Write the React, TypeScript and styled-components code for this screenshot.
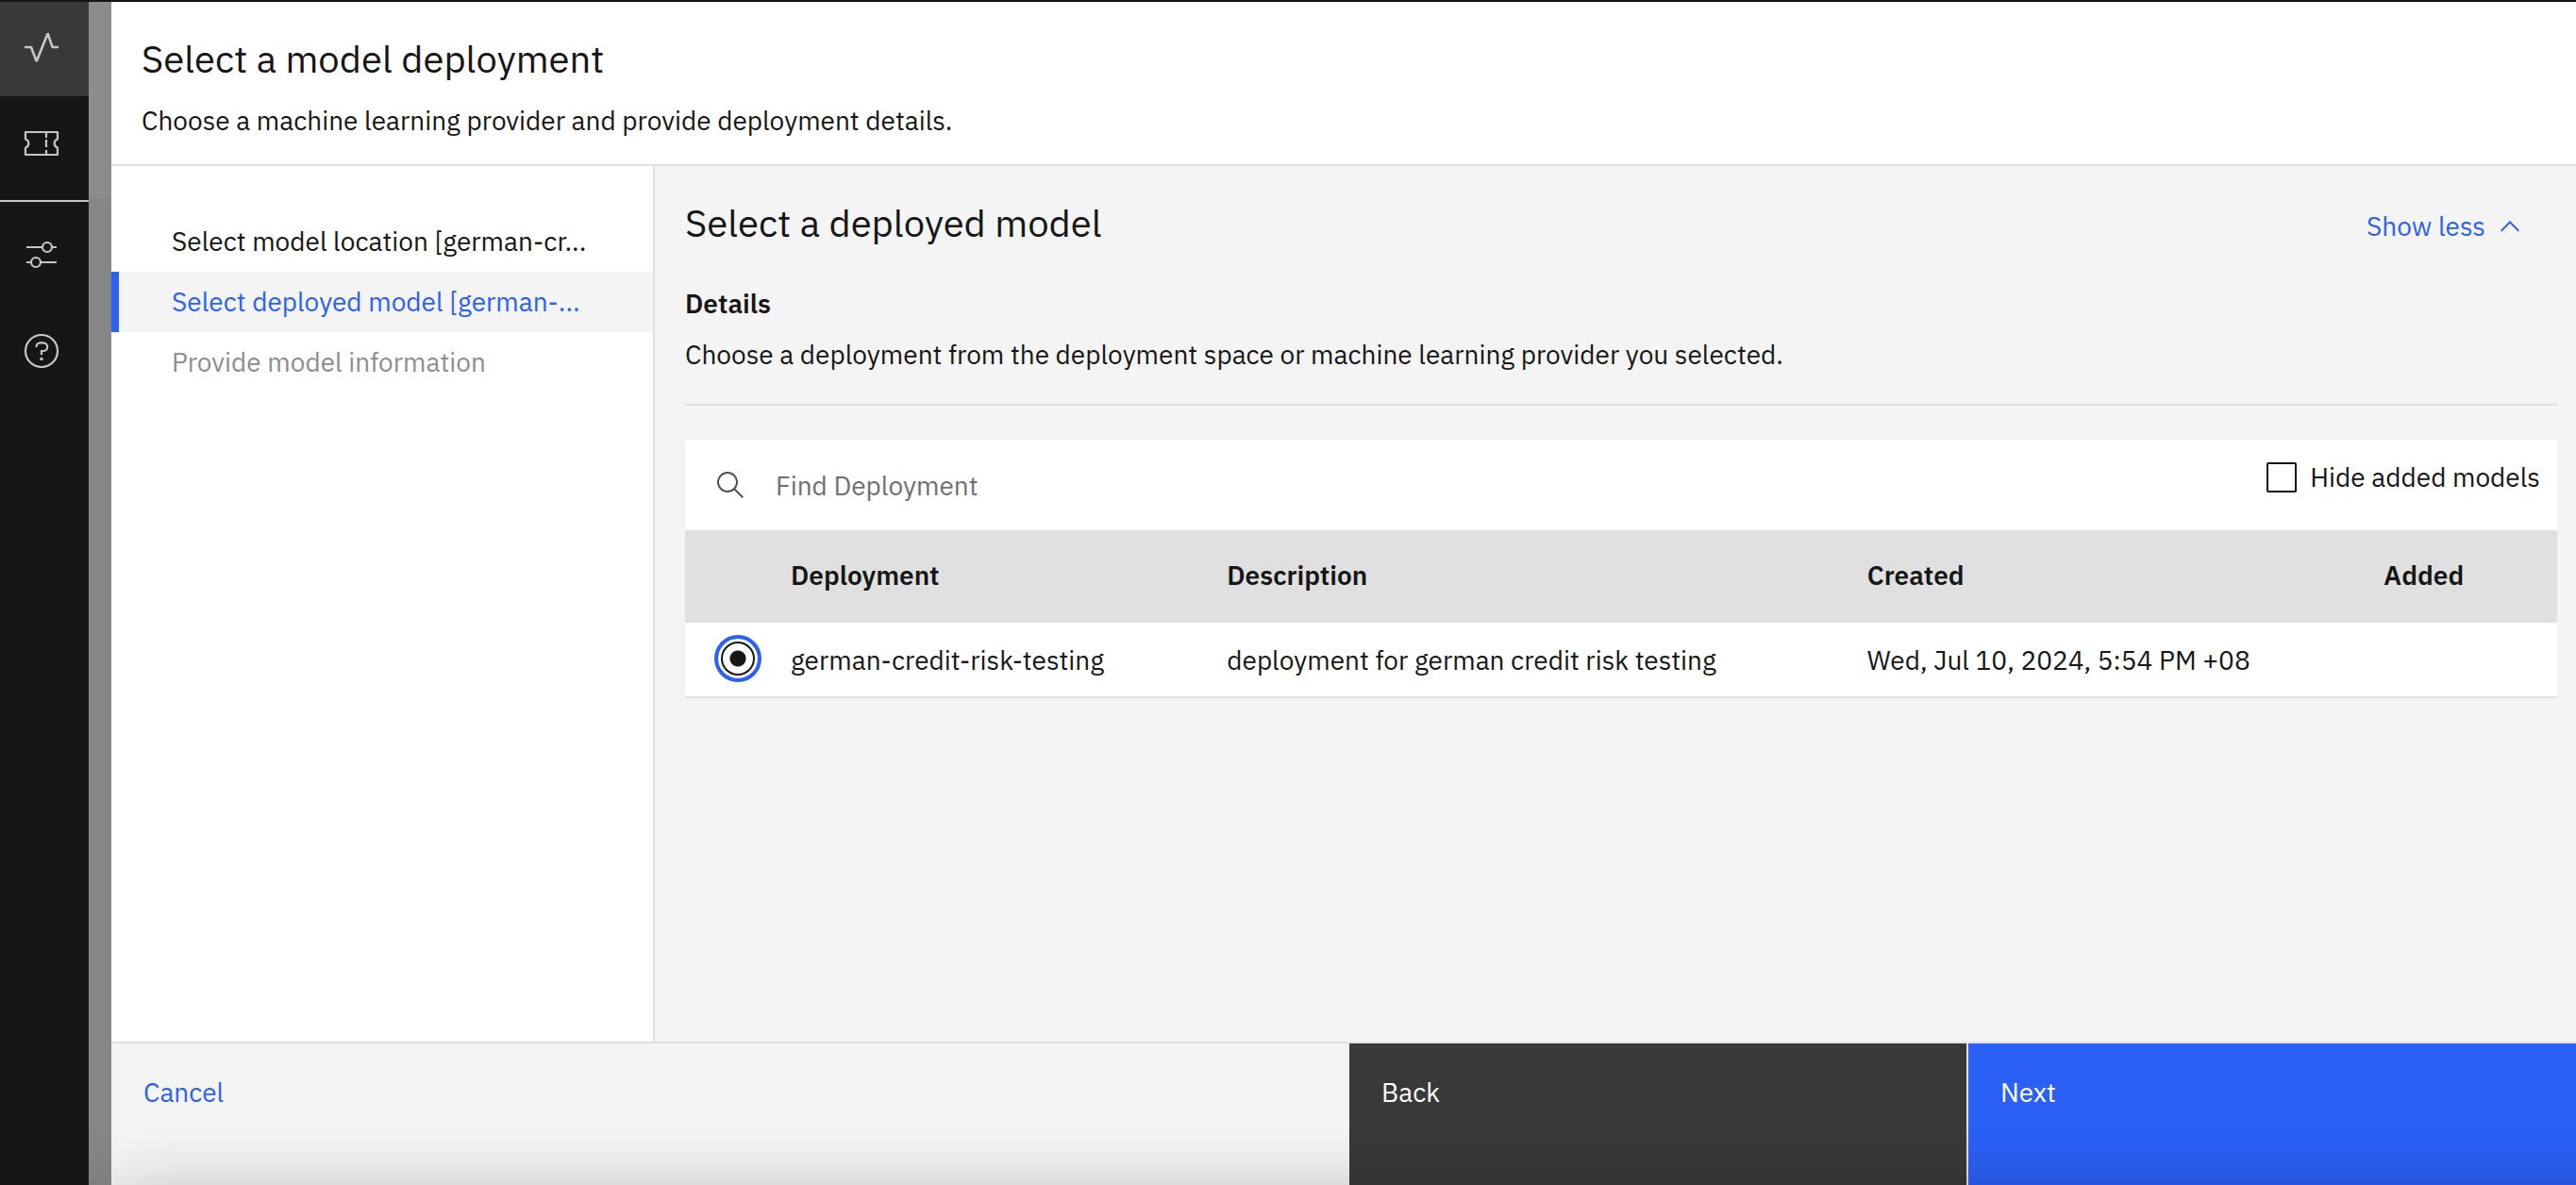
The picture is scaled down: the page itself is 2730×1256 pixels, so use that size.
import React, { useState } from "react";
import styled, { createGlobalStyle } from "styled-components";

const color = {
  ink: "#161616",
  blue: "#2b60f6",
  dark: "#393939",
  line: "#e0e0e0",
  layer: "#f4f4f4",
  muted: "#6f6f6f",
  disabled: "#8d8d8d",
  icon: "#c6c6c6",
};

const GlobalStyle = createGlobalStyle`
  *, *::before, *::after { box-sizing: border-box; }
  body {
    margin: 0;
    color: ${color.ink};
    font-family: "IBM Plex Sans", Roboto, "Liberation Sans", sans-serif;
    font-size: 28px;
    line-height: 36px;
  }
  button, input { font: inherit; color: inherit; }
  h1, h2, h3, p, ol { margin: 0; padding: 0; }
`;

const Shell = styled.div`
  position: relative;
  display: flex;
  min-height: 100vh;
  border-top: 2px solid ${color.ink};
`;

const Rail = styled.nav`
  display: flex;
  flex-direction: column;
  flex: none;
  width: 94px;
  background: ${color.ink};
`;

const RailGroup = styled.div<{ $item: number }>`
  display: grid;
  grid-auto-rows: ${(p) => p.$item}px;
`;

const RailButton = styled.button<{ $active?: boolean }>`
  display: flex;
  align-items: center;
  padding: 0 0 0 26px;
  border: 0;
  background: ${(p) => (p.$active ? color.dark : "transparent")};
  color: ${color.icon};
  cursor: pointer;
`;

const RailDivider = styled.hr`
  width: 100%;
  height: 2px;
  margin: 10px 0 5px;
  border: 0;
  background: ${color.icon};
`;

const RailIcon = styled.svg.attrs({ viewBox: "0 0 36 36", fill: "none", stroke: "currentColor", "aria-hidden": true })`
  width: 36px;
  height: 36px;
  overflow: visible;
  stroke-width: 2.2;
`;

const Backdrop = styled.div`
  display: flex;
  flex-direction: column;
  flex: none;
  width: 24px;
  background: #868686;
`;

const BackdropHeader = styled.div`
  height: 208px;
  background: #8c8c8c;
`;

const Panel = styled.div`
  display: flex;
  flex: 1;
  flex-direction: column;
  min-width: 0;
  background: ${color.layer};
`;

const PanelHeader = styled.header`
  display: grid;
  gap: 20px;
  padding: 32px 32px 28px;
  border-bottom: 2px solid ${color.line};
  background: #fff;
`;

const Title = styled.h1`
  font-size: 40px;
  font-weight: 400;
  line-height: 56px;
`;

const PanelBody = styled.div`
  display: flex;
  flex: 1;
`;

const Steps = styled.ol`
  flex: none;
  width: 576px;
  padding-top: 48px;
  border-right: 2px solid ${color.line};
  background: #fff;
  list-style: none;
`;

const StepButton = styled.button<{ $active?: boolean }>`
  display: flex;
  align-items: center;
  width: 100%;
  height: 64px;
  padding: 0 32px 0 ${(p) => (p.$active ? 56 : 64)}px;
  border: 0;
  border-left: ${(p) => (p.$active ? `8px solid ${color.blue}` : 0)};
  background: ${(p) => (p.$active ? color.layer : "transparent")};
  color: ${(p) => (p.$active ? color.blue : color.ink)};
  white-space: nowrap;
  cursor: pointer;

  &:disabled {
    color: ${color.disabled};
    cursor: default;
  }
`;

const Content = styled.main`
  flex: 1;
  min-width: 0;
  padding: 32px 20px 32px 32px;
`;

const ContentHeader = styled.div`
  display: flex;
  align-items: flex-start;
  justify-content: space-between;
  margin-bottom: 32px;
`;

const ToggleButton = styled.button`
  display: flex;
  align-items: center;
  gap: 10px;
  height: 64px;
  padding: 0 34px 0 0;
  border: 0;
  background: none;
  color: ${color.blue};
  cursor: pointer;
`;

const Chevron = styled.svg`
  width: 32px;
  height: 32px;
  fill: currentColor;
`;

const Details = styled.section`
  display: grid;
  gap: 18px;
  padding-bottom: 34px;
  border-bottom: 2px solid ${color.line};
`;

const SectionTitle = styled.h3`
  font-size: 28px;
  font-weight: 600;
`;

const Deployments = styled.section`
  margin-top: 36px;
`;

const Toolbar = styled.div`
  display: flex;
  height: 96px;
  padding: 0 18px 0 32px;
  background: #fff;
`;

const SearchField = styled.label`
  display: flex;
  flex: 1;
  align-items: center;
  gap: 32px;
`;

const SearchIcon = styled.svg`
  flex: none;
  width: 32px;
  height: 32px;
  stroke: #525252;
  stroke-width: 2;
  fill: none;
`;

const SearchInput = styled.input`
  flex: 1;
  min-width: 0;
  height: 64px;
  padding: 0;
  border: 0;
  outline: 0;
  background: none;

  &::placeholder {
    color: ${color.muted};
    opacity: 1;
  }
`;

const CheckLabel = styled.label`
  display: flex;
  align-items: center;
  align-self: flex-start;
  gap: 14px;
  padding-top: 22px;
`;

const Checkbox = styled.input`
  width: 32px;
  height: 32px;
  margin: 0;
  border: 2px solid ${color.ink};
  border-radius: 2px;
  background: #fff;
  appearance: none;

  &:checked {
    background: ${color.ink};
    box-shadow: inset 0 0 0 4px #fff;
  }
`;

const Table = styled.table`
  width: 100%;
  border-collapse: collapse;
  table-layout: fixed;
  text-align: left;
`;

const HeadCell = styled.th<{ $width?: string }>`
  width: ${(p) => p.$width ?? "auto"};
  height: 98px;
  padding: 0 0 2px;
  background: ${color.line};
  font-weight: 600;
`;

const Row = styled.tr`
  background: #fff;
  box-shadow: inset 0 -2px 0 ${color.line};
`;

const Cell = styled.td`
  height: 80px;
  padding: 0;
`;

const RadioCell = styled(Cell)`
  padding-bottom: 4px;
  text-align: center;
  line-height: 0;
`;

const Radio = styled.input`
  width: 36px;
  height: 36px;
  margin: 0;
  border: 2px solid ${color.ink};
  border-radius: 50%;
  background: #fff;
  appearance: none;
  vertical-align: middle;

  &:checked {
    background: radial-gradient(circle, ${color.ink} 8px, #fff 9px);
    outline: 4px solid ${color.blue};
    outline-offset: 3px;
  }
`;

const Footer = styled.footer`
  display: grid;
  grid-template-columns: 656fr 328fr 322fr;
  height: 152px;
  border-top: 2px solid ${color.line};
`;

const FooterButton = styled.button<{ $kind: "ghost" | "secondary" | "primary" }>`
  display: flex;
  align-items: flex-start;
  padding: 34px;
  border: 0;
  border-right: ${(p) => (p.$kind === "secondary" ? `2px solid ${color.line}` : 0)};
  background: ${(p) => ({ ghost: "transparent", secondary: color.dark, primary: color.blue })[p.$kind]};
  color: ${(p) => (p.$kind === "ghost" ? color.blue : "#fff")};
  cursor: pointer;
`;

const BottomShade = styled.div`
  position: absolute;
  right: 0;
  bottom: 0;
  left: 94px;
  height: 68px;
  background: linear-gradient(rgba(0, 0, 0, 0), rgba(0, 0, 0, 0.015) 35%, rgba(0, 0, 0, 0.05) 72%, rgba(0, 0, 0, 0.1));
  mask-image: linear-gradient(to right, rgba(0, 0, 0, 0.4), #000 100px);
  pointer-events: none;
`;

const deployments = [
  {
    id: "german-credit-risk-testing",
    description: "deployment for german credit risk testing",
    created: "Wed, Jul 10, 2024, 5:54 PM +08",
    added: "",
  },
];

export default function App() {
  const [selected, setSelected] = useState(deployments[0].id);
  const [query, setQuery] = useState("");
  const [hideAdded, setHideAdded] = useState(false);

  return (
    <>
      <GlobalStyle />
      <Shell>
        <Rail aria-label="Main">
          <RailGroup $item={100}>
            <RailButton $active aria-label="Insights">
              <RailIcon>
                <path d="M0 16h7L12.7 31 24.6 1.5l5 14.5H36" strokeWidth="2.6" strokeLinejoin="bevel" />
              </RailIcon>
            </RailButton>
            <RailButton aria-label="Tickets">
              <RailIcon>
                <path d="M1 6h34v7.5a4.7 4.7 0 0 0 0 9V30H1v-7.5a4.7 4.7 0 0 0 0-9z" strokeLinejoin="round" />
                <path d="M23 7v5M23 14v8M23 25v4" />
              </RailIcon>
            </RailButton>
          </RailGroup>
          <RailDivider />
          <RailGroup $item={102}>
            <RailButton aria-label="Configure">
              <RailIcon>
                <path d="M2 10h17M29 10h5M2 26h5M17 26h17" />
                <circle cx="24" cy="10" r="5" />
                <circle cx="12" cy="26" r="5" />
              </RailIcon>
            </RailButton>
            <RailButton aria-label="Help">
              <RailIcon>
                <circle cx="18" cy="18" r="17" />
                <path d="M12.5 14v-.5a4.2 4.2 0 0 1 4.2-4.2h3.1a4.3 4.3 0 0 1 0 8.7H18v4.2" />
                <circle cx="18" cy="26.5" r="1.8" fill="currentColor" stroke="none" />
              </RailIcon>
            </RailButton>
          </RailGroup>
        </Rail>

        <Backdrop>
          <BackdropHeader />
        </Backdrop>

        <Panel>
          <PanelHeader>
            <Title>Select a model deployment</Title>
            <p>Choose a machine learning provider and provide deployment details.</p>
          </PanelHeader>

          <PanelBody>
            <Steps>
              <li>
                <StepButton>Select model location [german-cr...</StepButton>
              </li>
              <li>
                <StepButton $active aria-current="step">
                  Select deployed model [german-...
                </StepButton>
              </li>
              <li>
                <StepButton disabled>Provide model information</StepButton>
              </li>
            </Steps>

            <Content>
              <ContentHeader>
                <Title as="h2">Select a deployed model</Title>
                <ToggleButton>
                  Show less
                  <Chevron viewBox="0 0 32 32" aria-hidden="true">
                    <path d="M16 10 26 20l-1.4 1.4-8.6-8.6-8.6 8.6L6 20z" />
                  </Chevron>
                </ToggleButton>
              </ContentHeader>

              <Details>
                <SectionTitle>Details</SectionTitle>
                <p>Choose a deployment from the deployment space or machine learning provider you selected.</p>
              </Details>

              <Deployments>
                <Toolbar>
                  <SearchField>
                    <SearchIcon viewBox="0 0 32 32" aria-hidden="true">
                      <circle cx="13" cy="13" r="10" />
                      <path d="m20.2 20.2 9 9" />
                    </SearchIcon>
                    <SearchInput
                      type="text"
                      aria-label="Find Deployment"
                      placeholder="Find Deployment"
                      value={query}
                      onChange={(e) => setQuery(e.target.value)}
                    />
                  </SearchField>
                  <CheckLabel>
                    <Checkbox type="checkbox" checked={hideAdded} onChange={(e) => setHideAdded(e.target.checked)} />
                    Hide added models
                  </CheckLabel>
                </Toolbar>

                <Table>
                  <thead>
                    <tr>
                      <HeadCell $width="112px" aria-label="Selected" />
                      <HeadCell $width="23.3%">Deployment</HeadCell>
                      <HeadCell $width="34.2%">Description</HeadCell>
                      <HeadCell $width="27.6%">Created</HeadCell>
                      <HeadCell>Added</HeadCell>
                    </tr>
                  </thead>
                  <tbody>
                    {deployments.map((d) => (
                      <Row key={d.id}>
                        <RadioCell>
                          <Radio
                            type="radio"
                            name="deployment"
                            aria-label={d.id}
                            checked={selected === d.id}
                            onChange={() => setSelected(d.id)}
                          />
                        </RadioCell>
                        <Cell>{d.id}</Cell>
                        <Cell>{d.description}</Cell>
                        <Cell>{d.created}</Cell>
                        <Cell>{d.added}</Cell>
                      </Row>
                    ))}
                  </tbody>
                </Table>
              </Deployments>
            </Content>
          </PanelBody>

          <Footer>
            <FooterButton $kind="ghost">Cancel</FooterButton>
            <FooterButton $kind="secondary">Back</FooterButton>
            <FooterButton $kind="primary">Next</FooterButton>
          </Footer>
        </Panel>
        <BottomShade />
      </Shell>
    </>
  );
}
